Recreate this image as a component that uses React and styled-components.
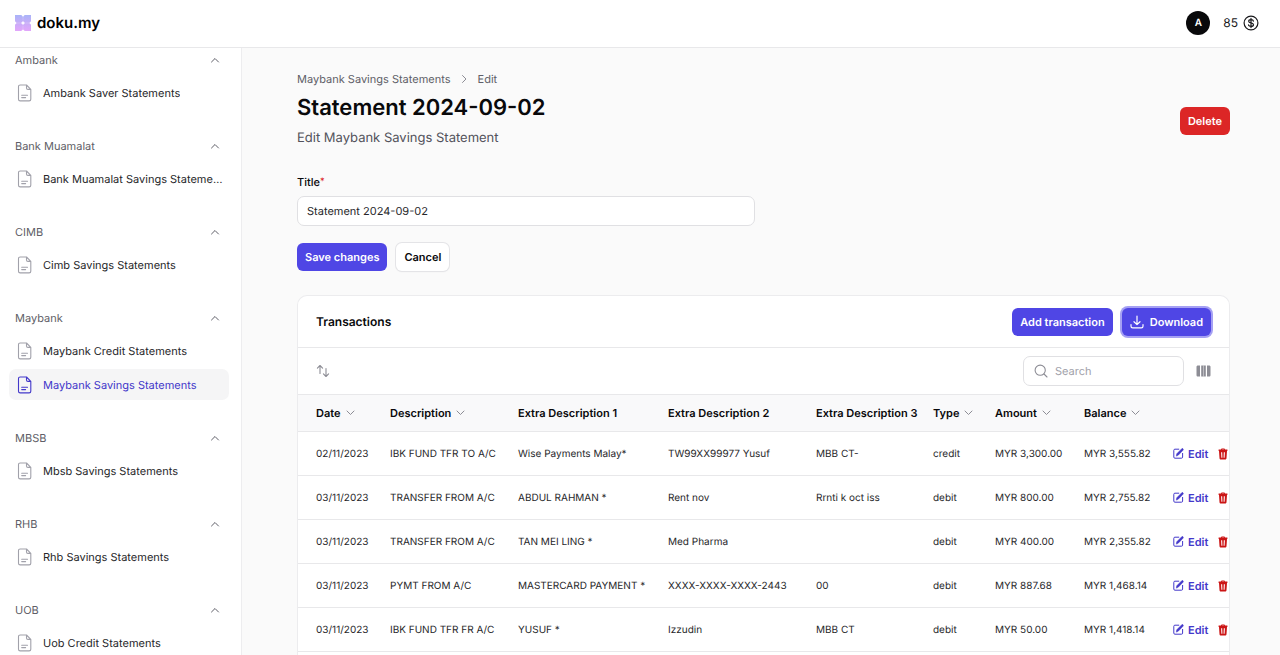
import React from 'react'
import styled, { createGlobalStyle, css } from 'styled-components'

const GlobalStyle = createGlobalStyle`
	*, *::before, *::after {
		box-sizing: border-box;
	}
	body {
		margin: 0;
		background: #fafafa;
		color: #09090b;
		font-family: Inter, "Liberation Sans", sans-serif;
		font-size: 11px;
		line-height: 16px;
		text-rendering: geometricPrecision;
		-webkit-font-smoothing: antialiased;
	}
	button, input {
		font: inherit;
		color: inherit;
		text-rendering: inherit;
	}
	a {
		color: inherit;
		text-decoration: none;
	}
	h1, h2, p, ul, ol {
		margin: 0;
		padding: 0;
	}
	ul, ol {
		list-style: none;
	}
`

const Page = styled.div`
	display: flex;
	flex-direction: column;
	height: 100vh;
	overflow: hidden;
`

const Topbar = styled.header`
	display: flex;
	align-items: center;
	justify-content: space-between;
	flex: none;
	height: 48px;
	padding: 0 21px 2px 15px;
	background: #fff;
	border-bottom: 1px solid #e8e8ea;
`

const Brand = styled.a`
	display: flex;
	align-items: center;
	gap: 6px;
	font-size: 15px;
	line-height: 20px;
	font-weight: 600;
	color: #000;
`

const Account = styled.div`
	display: flex;
	align-items: center;
	gap: 13px;
`

const Avatar = styled.button`
	width: 24px;
	height: 24px;
	padding: 0;
	border: 0;
	border-radius: 50%;
	background: #09090b;
	color: #fff;
	font-size: 10px;
	font-weight: 600;
`

const Credits = styled.span`
	display: flex;
	align-items: center;
	gap: 5px;
	font-size: 12px;
	color: #18181b;
`

const Body = styled.div`
	display: flex;
	flex: 1;
	min-height: 0;
`

const Sidebar = styled.nav`
	flex: none;
	width: 242px;
	padding: 0 12px 0 9px;
	background: #fff;
	border-right: 1px solid #ededef;
	overflow: hidden;
`

const Group = styled.section`
	margin-bottom: 26px;
`

const GroupButton = styled.button`
	display: flex;
	align-items: center;
	justify-content: space-between;
	width: 100%;
	height: 24px;
	margin-bottom: 5px;
	padding: 0 9px 0 6px;
	border: 0;
	background: none;
	color: #5f5f68;
`

const GroupItems = styled.ul`
	display: flex;
	flex-direction: column;
	gap: 3px;
`

const NavLink = styled.a`
	display: flex;
	align-items: center;
	gap: 10px;
	height: 31px;
	padding: 0 5px 0 7px;
	border-radius: 7px;
	color: #27272a;

	svg {
		flex: none;
		color: #a1a1aa;
	}
	span {
		overflow: hidden;
		white-space: nowrap;
		text-overflow: ellipsis;
	}

	${props => props.$active && css`
		background: #f5f5f6;
		color: #4338ca;

		svg {
			color: #4338ca;
		}
	`}
`

const Main = styled.main`
	display: flex;
	flex: 1;
	flex-direction: column;
	min-width: 0;
	padding: 23px 50px 0 55px;
	overflow: hidden;
`

const PageHeader = styled.header`
	display: flex;
	align-items: center;
	justify-content: space-between;
	margin: 7px 0 26px;
`

const Breadcrumbs = styled.ol`
	display: flex;
	align-items: center;
	gap: 10px;
	color: #5f5f68;

	li {
		display: flex;
		align-items: center;
		gap: 10px;
	}
	svg {
		color: #8d8d95;
	}
`

const Heading = styled.h1`
	margin-bottom: 6px;
	font-size: 22px;
	line-height: 28px;
	font-weight: 600;
`

const Subheading = styled.p`
	font-size: 13px;
	line-height: 20px;
	color: #52525b;
`

const Button = styled.button`
	display: inline-flex;
	align-items: center;
	justify-content: center;
	gap: 6px;
	height: 28px;
	padding: 0 8px;
	border: 0;
	border-radius: 6px;
	background: ${props => props.$danger ? '#dc2626' : '#4f46e5'};
	font-weight: 600;
	color: #fff;
	white-space: nowrap;

	${props => props.$outlined && css`
		background: #fff;
		color: #09090b;
		box-shadow: 0 0 0 1px #e4e4e7, 0 1px 2px rgba(0, 0, 0, 0.05);
	`}
	${props => props.$focused && css`
		box-shadow: 0 0 0 2px #a5a0f3;
	`}
`

const Form = styled.form`
	display: grid;
	grid-template-columns: repeat(2, 1fr);
	column-gap: 18px;
	margin-bottom: 24px;
`

const Label = styled.label`
	display: block;
	margin-bottom: 6px;
	font-weight: 500;

	sup {
		font-size: 9px;
		line-height: 0;
		vertical-align: 2px;
		color: #dc2626;
	}
`

const fieldStyle = css`
	border: 1px solid #e0e0e3;
	border-radius: 7px;
	background: #fff;
`

const TextInput = styled.input`
	${fieldStyle}
	display: block;
	width: 100%;
	height: 30px;
	padding: 0 9px;
	color: #27272a;
	outline: none;
`

const Actions = styled.div`
	display: flex;
	align-items: center;
	gap: 9px;
`

const RowActions = styled(Actions)`
	gap: 10px;
	font-size: 11px;
`

const FormActions = styled(Actions)`
	grid-column: 1 / -1;
	margin-top: 17px;
`

const Card = styled.section`
	flex: 1 0 auto;
	border: 1px solid #ececee;
	border-bottom: 0;
	border-radius: 10px 10px 0 0;
	background: #fff;
	overflow: hidden;
`

const CardHeader = styled.div`
	display: flex;
	align-items: center;
	justify-content: space-between;
	height: 52px;
	padding: 0 18px;
	border-bottom: 1px solid #e8e8ea;

	h2 {
		font-size: 12px;
		font-weight: 600;
	}
`

const Toolbar = styled.div`
	display: flex;
	align-items: center;
	justify-content: space-between;
	height: 47px;
	padding: 0 18px;
	border-bottom: 1px solid #e8e8ea;
	color: #8d8d95;
`

const IconButton = styled.button`
	display: flex;
	padding: 0;
	border: 0;
	background: none;
	color: ${props => props.$danger ? '#cb1515' : 'inherit'};
`

const SearchBox = styled.label`
	${fieldStyle}
	display: flex;
	align-items: center;
	gap: 7px;
	width: 161px;
	height: 30px;
	margin-right: 3px;
	padding: 0 10px;

	input {
		flex: 1;
		min-width: 0;
		padding: 0;
		border: 0;
		background: none;
		outline: none;
	}
	input::placeholder {
		color: #a1a1aa;
		opacity: 1;
	}
`

const TableScroll = styled.div`
	overflow: hidden;
`

const Table = styled.table`
	width: max(100%, 956px);
	table-layout: fixed;
	border-collapse: separate;
	border-spacing: 0;

	th, td {
		height: 44px;
		padding: 0 9px;
		border-bottom: 1px solid #e8e8ea;
		text-align: left;
		white-space: nowrap;
	}
	th {
		height: 37px;
		background: #f9f9fa;
		font-weight: 600;
	}
	td {
		font-size: 10px;
		color: #27272a;
	}
	th:first-child, td:first-child {
		padding-left: 18px;
	}
`

const SortButton = styled.button`
	display: flex;
	align-items: center;
	gap: 5px;
	padding: 0;
	border: 0;
	background: none;
	font-weight: 600;

	svg {
		color: #8d8d95;
	}
`

const EditLink = styled.a`
	display: flex;
	align-items: center;
	gap: 4px;
	font-weight: 600;
	color: #4338ca;
`

const Svg = ({ w, h, width = 1, children }) => (
	<svg
		width={w}
		height={h}
		viewBox={`0 0 ${w} ${h}`}
		fill='none'
		stroke='currentColor'
		strokeWidth={width}
		strokeLinecap='round'
		strokeLinejoin='round'
		aria-hidden='true'
	>
		{children}
	</svg>
)

const LogoIcon = () => (
	<svg width='16' height='16' viewBox='0 0 16 16' aria-hidden='true'>
		<defs>
			<linearGradient id='logo' x1='0' y1='0' x2='0' y2='1'>
				<stop offset='0' stopColor='#a9b4f8' />
				<stop offset='0.5' stopColor='#c8acf8' />
				<stop offset='1' stopColor='#e2a6fb' />
			</linearGradient>
		</defs>
		<path
			fill='url(#logo)'
			d='M0 0H6.3L8 1.8L9.7 0H16V6.2L14.4 8L16 9.8V16H9.8L8 14.4L6.2 16H0V9.8L1.6 8L0 6.2Z'
		/>
		<path fill='#fff' d='M8 5.4L8.7 7.3L10.6 8L8.7 8.7L8 10.6L7.3 8.7L5.4 8L7.3 7.3Z' />
		<path stroke='#fff' strokeOpacity='0.5' strokeWidth='0.4' d='M8 1V5M8 11V15M1 8H5M11 8H15' />
	</svg>
)

const CoinIcon = () => (
	<Svg w={16} h={16} width={1.2}>
		<circle cx='8' cy='8' r='6.9' />
		<path d='M10.4 6.1C10.3 5.1 9.3 4.6 8 4.6S5.7 5.2 5.7 6.2C5.7 8.6 10.5 7.2 10.5 9.7C10.5 10.8 9.4 11.4 8 11.4S5.6 10.8 5.5 9.8M8 3.4V12.6' />
	</Svg>
)

const DocumentIcon = () => (
	<Svg w={17} h={18} width={1.1}>
		<path d='M10.5 1H4.2C3.2 1 2.5 1.7 2.5 2.7V15.2C2.5 16.2 3.2 16.9 4.2 16.9H13.1C14.1 16.9 14.8 16.2 14.8 15.2V5.4L10.5 1V4C10.5 4.8 11 5.4 11.9 5.4H14.8M5.7 11.2H11.5M5.7 13.6H9.6' />
	</Svg>
)

const ChevronUp = () => <Svg w={10} h={6}><path d='M1.5 5L5 1.5L8.5 5' /></Svg>
const ChevronDown = () => <Svg w={9} h={6}><path d='M1 1L4.5 4.5L8 1' /></Svg>
const ChevronRight = () => <Svg w={7} h={10}><path d='M1.5 1.5L5 5L1.5 8.5' /></Svg>

const SortIcon = () => (
	<Svg w={14} h={14} width={1.1}>
		<path d='M4 9.5V1.5M1.4 4.1L4 1.5L6.6 4.1M10 4.5V12.5M7.4 9.9L10 12.5L12.6 9.9' />
	</Svg>
)

const SearchIcon = () => (
	<Svg w={14} h={14} width={1.1}>
		<circle cx='6.2' cy='6.2' r='5.1' />
		<path d='M10 10L13 13' />
	</Svg>
)

const ColumnsIcon = () => (
	<svg width='15' height='12' viewBox='0 0 15 12' fill='currentColor' aria-hidden='true'>
		<path d='M2 0.5H4V11.5H2C1 11.5 0.5 11 0.5 10V2C0.5 1 1 0.5 2 0.5ZM5.2 0.5H9.8V11.5H5.2ZM11 0.5H13C14 0.5 14.5 1 14.5 2V10C14.5 11 14 11.5 13 11.5H11Z' />
		<path fill='#fff' fillOpacity='0.7' d='M7.2 0.5H7.8V11.5H7.2Z' />
	</svg>
)

const DownloadIcon = () => (
	<Svg w={14} h={14} width={1.2}>
		<path d='M7 1V9.6M4 6.7L7 9.6L10 6.7M1 9.5V11.2C1 12.2 1.7 12.9 2.7 12.9H11.3C12.3 12.9 13 12.2 13 11.2V9.5' />
	</Svg>
)

const EditIcon = () => (
	<Svg w={11} h={11} width={1}>
		<path d='M5.8 1.2H1.9C1.2 1.2 0.8 1.6 0.8 2.3V9.1C0.8 9.8 1.2 10.2 1.9 10.2H8.5C9.2 10.2 9.6 9.8 9.6 9.1V5.4' />
		<path fill='currentColor' strokeWidth='0.6' d='M3.4 7.7L3.8 5.8L8.6 0.9C9.1 0.4 9.7 0.5 10 0.8S10.4 1.8 10 2.2L5.2 7.2Z' />
	</Svg>
)

const TrashIcon = () => (
	<svg width='10' height='12' viewBox='0 0 10 12' aria-hidden='true'>
		<path
			fill='currentColor'
			fillRule='evenodd'
			d='M3 1.6C3 0.8 3.5 0.4 4.2 0.4H5.8C6.5 0.4 7 0.8 7 1.6H9.4V3H9L8.5 10.3C8.4 11.1 7.9 11.6 7.1 11.6H2.9C2.1 11.6 1.6 11.1 1.5 10.3L1 3H0.6V1.6ZM4 1.6H6C6 1.4 5.9 1.3 5.7 1.3H4.3C4.1 1.3 4 1.4 4 1.6ZM3.1 4.2L3.4 9.8H4.4L4.2 4.2ZM5.8 4.2L5.6 9.8H6.6L6.9 4.2Z'
		/>
	</svg>
)

const groups = [
	{ name: 'Ambank', items: ['Ambank Saver Statements'] },
	{ name: 'Bank Muamalat', items: ['Bank Muamalat Savings Statements'] },
	{ name: 'CIMB', items: ['Cimb Savings Statements'] },
	{ name: 'Maybank', items: ['Maybank Credit Statements', 'Maybank Savings Statements'] },
	{ name: 'MBSB', items: ['Mbsb Savings Statements'] },
	{ name: 'RHB', items: ['Rhb Savings Statements'] },
	{ name: 'UOB', items: ['Uob Credit Statements'] },
]

const columns = [
	{ name: 'Date', width: 83, sortable: true },
	{ name: 'Description', width: 128, sortable: true },
	{ name: 'Extra Description 1', width: 150 },
	{ name: 'Extra Description 2', width: 148 },
	{ name: 'Extra Description 3', width: 117 },
	{ name: 'Type', width: 62, sortable: true },
	{ name: 'Amount', width: 89, sortable: true },
	{ name: 'Balance', width: 89, sortable: true },
]

const rows = [
	['02/11/2023', 'IBK FUND TFR TO A/C', 'Wise Payments Malay*', 'TW99XX99977 Yusuf', 'MBB CT-', 'credit', 'MYR 3,300.00', 'MYR 3,555.82'],
	['03/11/2023', 'TRANSFER FROM A/C', 'ABDUL RAHMAN *', 'Rent nov', 'Rrnti k oct iss', 'debit', 'MYR 800.00', 'MYR 2,755.82'],
	['03/11/2023', 'TRANSFER FROM A/C', 'TAN MEI LING *', 'Med Pharma', '', 'debit', 'MYR 400.00', 'MYR 2,355.82'],
	['03/11/2023', 'PYMT FROM A/C', 'MASTERCARD PAYMENT *', 'XXXX-XXXX-XXXX-2443', '00', 'debit', 'MYR 887.68', 'MYR 1,468.14'],
	['03/11/2023', 'IBK FUND TFR FR A/C', 'YUSUF *', 'Izzudin', 'MBB CT', 'debit', 'MYR 50.00', 'MYR 1,418.14'],
]

const App = () => {
	const { useState } = React
	const [title, setTitle] = useState('Statement 2024-09-02')
	const [search, setSearch] = useState('')
	const [closed, setClosed] = useState([])

	function toggleGroup(name) {
		setClosed(prev => prev.includes(name) ? prev.filter(n => n !== name) : [...prev, name])
	}

	const visible = rows.filter(row => row.join(' ').toLowerCase().includes(search.toLowerCase()))

	return (
		<Page>
			<GlobalStyle />
			<Topbar>
				<Brand href='#'><LogoIcon />doku.my</Brand>
				<Account>
					<Avatar>A</Avatar>
					<Credits>85 <CoinIcon /></Credits>
				</Account>
			</Topbar>
			<Body>
				<Sidebar>
					{
						groups.map(group => (
							<Group key={group.name}>
								<GroupButton onClick={() => toggleGroup(group.name)}>
									{group.name}
									<ChevronUp />
								</GroupButton>
								{
									!closed.includes(group.name) &&
									<GroupItems>
										{
											group.items.map(item => (
												<li key={item}>
													<NavLink href='#' $active={item === 'Maybank Savings Statements'}>
														<DocumentIcon />
														<span>{item}</span>
													</NavLink>
												</li>
											))
										}
									</GroupItems>
								}
							</Group>
						))
					}
				</Sidebar>
				<Main>
					<Breadcrumbs>
						<li><a href='#'>Maybank Savings Statements</a></li>
						<li><ChevronRight /><a href='#'>Edit</a></li>
					</Breadcrumbs>
					<PageHeader>
						<div>
							<Heading>Statement 2024-09-02</Heading>
							<Subheading>Edit Maybank Savings Statement</Subheading>
						</div>
						<Button $danger>Delete</Button>
					</PageHeader>

					<Form onSubmit={e => e.preventDefault()}>
						<div>
							<Label htmlFor='title'>Title<sup>*</sup></Label>
							<TextInput id='title' value={title} onChange={e => setTitle(e.target.value)} />
						</div>
						<FormActions>
							<Button type='submit'>Save changes</Button>
							<Button type='button' $outlined>Cancel</Button>
						</FormActions>
					</Form>

					<Card>
						<CardHeader>
							<h2>Transactions</h2>
							<Actions>
								<Button>Add transaction</Button>
								<Button $focused><DownloadIcon />Download</Button>
							</Actions>
						</CardHeader>
						<Toolbar>
							<IconButton aria-label='Reorder'><SortIcon /></IconButton>
							<Actions>
								<SearchBox>
									<SearchIcon />
									<input
										aria-label='Search'
										placeholder='Search'
										value={search}
										onChange={e => setSearch(e.target.value)}
									/>
								</SearchBox>
								<IconButton aria-label='Columns'><ColumnsIcon /></IconButton>
							</Actions>
						</Toolbar>
						<TableScroll>
							<Table>
								<colgroup>
									{columns.map(col => <col key={col.name} width={col.width} />)}
									<col />
								</colgroup>
								<thead>
									<tr>
										{
											columns.map(col => (
												<th key={col.name}>
													{col.sortable ? <SortButton>{col.name}<ChevronDown /></SortButton> : col.name}
												</th>
											))
										}
										<th />
									</tr>
								</thead>
								<tbody>
									{
										visible.map((row, i) => (
											<tr key={i}>
												{row.map((cell, j) => <td key={j}>{cell}</td>)}
												<td>
													<RowActions>
														<EditLink href='#'><EditIcon />Edit</EditLink>
														<IconButton $danger aria-label='Delete row'><TrashIcon /></IconButton>
													</RowActions>
												</td>
											</tr>
										))
									}
								</tbody>
							</Table>
						</TableScroll>
					</Card>
				</Main>
			</Body>
		</Page>
	)
}

export default App
